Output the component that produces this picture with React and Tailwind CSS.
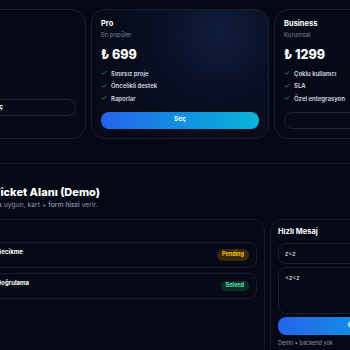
import { Check } from 'lucide-react';

const plans = [
  { name: 'Starter', tag: 'Ücretsiz', price: '₺ 0', features: ['1 proje', 'Temel destek'], primary: false },
  { name: 'Pro', tag: 'En popüler', price: '₺ 699', features: ['Sınırsız proje', 'Öncelikli destek', 'Raporlar'], primary: true },
  { name: 'Business', tag: 'Kurumsal', price: '₺ 1299', features: ['Çoklu kullanıcı', 'SLA', 'Özel entegrasyon'], primary: false },
];

const tickets = [
  { title: 'Gecikme', status: 'Pending' },
  { title: 'Doğrulama', status: 'Solved' },
];

function PlanCard({ plan }) {
  return (
    <div
      className={
        'relative overflow-hidden rounded-[14px] border border-[#19202f] p-[9px] ' +
        (plan.primary
          ? 'bg-[radial-gradient(circle_at_72%_18%,#0f1d3c_0%,#091026_35%,#070b18_70%)]'
          : 'bg-[#060a17]')
      }
    >
      <div className="text-[7.5px] font-bold leading-[10px] text-white">{plan.name}</div>
      <div className="mt-[1px] text-[6px] leading-[9px] text-[#7b8496]">{plan.tag}</div>
      <div className="mt-[8px] text-[12.5px] font-extrabold leading-[15px] text-white">{plan.price}</div>
      <ul className="mt-[5px]">
        {plan.features.map((f) => (
          <li key={f} className="flex h-[12.5px] items-center gap-[4px] text-[6px] font-semibold text-[#d6dbe5]">
            <Check className="h-[6px] w-[6px] text-[#1fae74]" strokeWidth={3} />
            <span>{f}</span>
          </li>
        ))}
      </ul>
      {plan.primary ? (
        <button className="mt-[7px] flex h-[17px] w-full items-center justify-center rounded-[8px] bg-gradient-to-r from-[#2563eb] to-[#0bb4d6] text-[6.5px] font-bold text-white">
          Seç
        </button>
      ) : (
        <button className="mt-[7px] flex h-[17px] w-full items-center justify-center rounded-[8px] border border-[#1d2436] text-[6.5px] font-bold text-white">
          Seç
        </button>
      )}
    </div>
  );
}

export default function App() {
  return (
    <div className="h-[350px] w-[350px] overflow-hidden bg-[#050815] font-['Inter',sans-serif] text-white">
      {/* Pricing */}
      <div className="-ml-[92px] grid w-[544px] grid-cols-3 gap-[5px] pt-[9px]">
        {plans.map((p) => (
          <PlanCard key={p.name} plan={p} />
        ))}
      </div>

      {/* Ticket section */}
      <section className="mt-[24px] border-t border-[#121828] pt-[21px]">
        <div className="-ml-[20px] w-[470px]">
          <div className="pl-[13px]">
            <h2 className="text-[11px] font-extrabold leading-[14px] text-white">Ticket Alanı (Demo)</h2>
            <p className="-ml-[41px] mt-[1.5px] whitespace-nowrap text-[6.8px] leading-[9px] text-[#8e97a8]">
              Mobil kullanıma uygun, kart + <span className="text-[#a9b8d6]">form hissi</span> verir.
            </p>
          </div>

          <div className="mt-[9.5px] grid grid-cols-[285px_179px] gap-[5px]">
            {/* Ticket list */}
            <div className="h-[140px] rounded-[12px] border border-[#151b2b] bg-[#050815] px-[7px] pt-[22px]">
              <div className="flex flex-col gap-[5px]">
                {tickets.map((t) => (
                  <div
                    key={t.title}
                    className="flex h-[26px] items-center justify-between rounded-[8px] border border-[#171e2f] bg-[#060916] pl-[8px] pr-[7px]"
                  >
                    <span className="-mt-[6px] text-[6px] font-bold text-white">{t.title}</span>
                    {t.status === 'Pending' ? (
                      <span className="rounded-full bg-[#3a280c] px-[5px] py-[2.5px] text-[5.5px] font-bold leading-[7px] text-[#f5c518]">
                        Pending
                      </span>
                    ) : (
                      <span className="rounded-full bg-[#0a2e25] px-[5px] py-[1.5px] text-[5.5px] font-bold leading-[7px] text-[#5fe0b0]">
                        Solved
                      </span>
                    )}
                  </div>
                ))}
              </div>
            </div>

            {/* Quick message */}
            <div className="h-[140px] rounded-[12px] border border-[#151b2b] bg-[#050815] px-[7px] pt-[7px]">
              <div className="text-[7.5px] font-bold leading-[10px] text-white">Hızlı Mesaj</div>
              <div className="mt-[6px] flex h-[21px] items-center rounded-[8px] border border-[#1a2132] bg-[#050815] px-[6px] text-[6px] text-[#e5e7eb]">
                z&lt;z
              </div>
              <div className="mt-[3px] h-[47px] rounded-[8px] border border-[#1a2132] bg-[#050815] px-[6px] pt-[5px] text-[6px] text-[#e5e7eb]">
                &lt;z&lt;z
              </div>
              <button className="mt-[3px] flex h-[18px] w-full items-center justify-center rounded-[8px] bg-gradient-to-r from-[#2563eb] to-[#0bb4d6] text-[6.5px] font-bold text-white">
                Gönder
              </button>
              <div className="mt-[4px] text-[5.5px] leading-[8px] text-[#8a92a3]">Demo • backend yok</div>
            </div>
          </div>
        </div>
      </section>
    </div>
  );
}
